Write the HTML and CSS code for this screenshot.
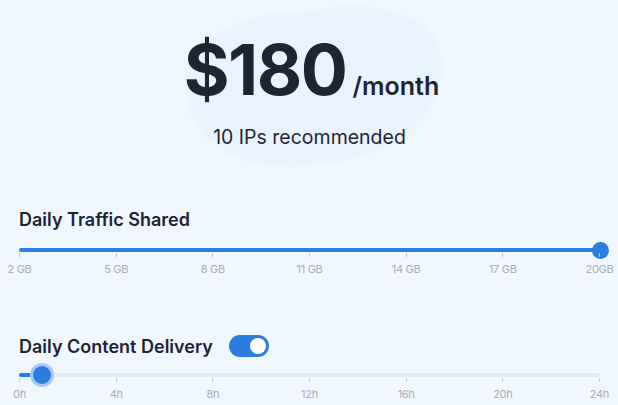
FILE: index.html
```html
<!DOCTYPE html>
<html>
<head>
<meta charset="utf-8">
<link rel="stylesheet" href="styles.css">
</head>
<body>
<div class="page">
  <div class="hero">
    <div class="blob"></div>
    <div class="price-row">
      <span class="price">$180</span><span class="per">/month</span>
    </div>
    <div class="sub">10 IPs recommended</div>
  </div>

  <div class="section first">
    <div class="label-row"><span class="label">Daily Traffic Shared</span></div>
    <div class="slider">
      <div class="track"><div class="fill" style="width:100%"></div></div>
      <div class="thumb" style="left:100%"></div>
    </div>
    <div class="scale">
      <div class="tick"><span>2 GB</span></div>
      <div class="tick"><span>5 GB</span></div>
      <div class="tick"><span>8 GB</span></div>
      <div class="tick"><span>11 GB</span></div>
      <div class="tick"><span>14 GB</span></div>
      <div class="tick"><span>17 GB</span></div>
      <div class="tick"><span>20GB</span></div>
    </div>
  </div>

  <div class="section second">
    <div class="label-row">
      <span class="label">Daily Content Delivery</span>
      <span class="toggle"><span class="knob"></span></span>
    </div>
    <div class="slider">
      <div class="track gray"><div class="fill" style="width:4%"></div></div>
      <div class="thumb halo" style="left:4%"></div>
    </div>
    <div class="scale">
      <div class="tick"><span>0h</span></div>
      <div class="tick"><span>4h</span></div>
      <div class="tick"><span>8h</span></div>
      <div class="tick"><span>12h</span></div>
      <div class="tick"><span>16h</span></div>
      <div class="tick"><span>20h</span></div>
      <div class="tick"><span>24h</span></div>
    </div>
  </div>
</div>
</body>
</html>
```

FILE: styles.css
```css
* { box-sizing: border-box; }
html, body {
  margin: 0;
  padding: 0;
  background: #f0f7fe;
}
body {
  font-family: Inter, "Noto Sans", sans-serif;
  color: #1f2533;
  width: 618px;
  height: 405px;
  overflow: hidden;
}
.page {
  padding: 0 18px 0 19px;
}
.hero {
  position: relative;
  display: flex;
  flex-direction: column;
  align-items: center;
  padding-top: 28px;
  height: 207px;
}
.blob {
  position: absolute;
  left: 168px;
  top: 10px;
  width: 256px;
  height: 154px;
  background: #e9f3fd;
  border-radius: 36% 40% 46% 42% / 40% 38% 56% 52%;
  transform: rotate(-7deg);
  filter: blur(2px);
}
.price-row {
  position: relative;
  display: flex;
  align-items: baseline;
  margin-left: 4px;
}
.price {
  font-size: 70px;
  font-weight: 700;
  letter-spacing: -1.5px;
  line-height: 84px;
  color: #1e2432;
}
.per {
  font-size: 25px;
  font-weight: 600;
  margin-left: 6px;
  color: #1e2432;
}
.sub {
  position: relative;
  font-size: 19.5px;
  font-weight: 400;
  margin-top: 13px;
  color: #1f2533;
}
.label-row {
  display: flex;
  align-items: center;
  gap: 16px;
  height: 24px;
}
.label {
  font-size: 18px;
  font-weight: 600;
  color: #1e2235;
}
.toggle {
  width: 40px;
  height: 22px;
  border-radius: 11px;
  background: #2b7de0;
  display: flex;
  align-items: center;
  justify-content: flex-end;
  padding-right: 3px;
}
.knob {
  width: 16px;
  height: 16px;
  border-radius: 50%;
  background: #ffffff;
}
.slider {
  position: relative;
  height: 4px;
  margin-top: 17px;
}
.second .slider { margin-top: 15px; }
.track {
  height: 4px;
  border-radius: 2px;
  background: #2b7de0;
  overflow: hidden;
}
.track.gray { background: #e2e8f0; }
.fill {
  height: 100%;
  background: #2b7de0;
}
.thumb {
  position: absolute;
  top: 2px;
  width: 17px;
  height: 17px;
  margin-left: -8.5px;
  margin-top: -8.5px;
  border-radius: 50%;
  background: #2b7de0;
}
.thumb.halo {
  width: 18px;
  height: 18px;
  margin-left: -9px;
  margin-top: -9px;
  box-shadow: 0 0 0 3px #a6ccf6;
}
.scale {
  display: flex;
  justify-content: space-between;
  height: 30px;
}
.tick {
  width: 1px;
  height: 4px;
  margin-top: 1px;
  background: #c3c8cf;
  display: flex;
  justify-content: center;
  position: relative;
}
.tick span {
  margin-top: 9px;
  flex: none;
  font-size: 11px;
  color: #a9aeb6;
  white-space: nowrap;
  letter-spacing: -0.3px;
}
.section.second {
  margin-top: 52px;
}
```
